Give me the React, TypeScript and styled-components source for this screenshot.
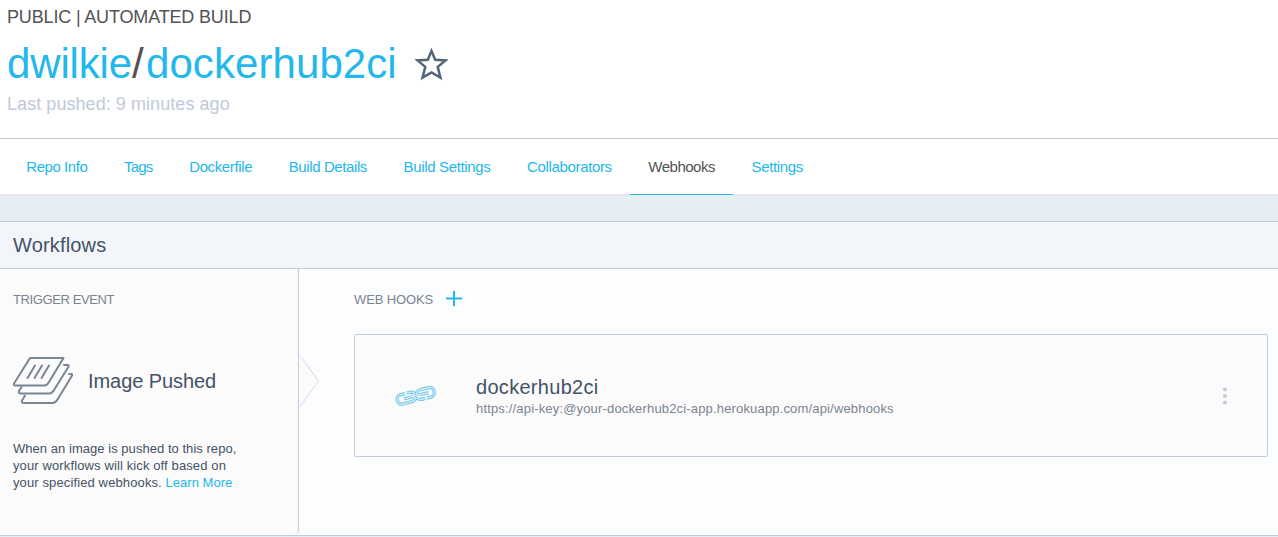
import React from 'react';
import styled, { createGlobalStyle } from 'styled-components';

const GlobalStyle = createGlobalStyle`
  * { box-sizing: border-box; }
  body {
    margin: 0;
    background: #fff;
    font-family: "Liberation Sans", Arial, sans-serif;
    color: #445266;
    overflow: hidden;
  }
`;

const Page = styled.div`
  height: 537px;
  display: flex;
  flex-direction: column;
  background: #e7edf5;
  overflow: hidden;
`;

const RepoHeader = styled.header`
  flex: none;
  height: 139px;
  padding: 6px 7px 0;
  background: #fff;
  border-bottom: 1px solid #c0c9d3;
  white-space: nowrap;
`;

const Visibility = styled.div`
  font-size: 18px;
  line-height: 23px;
  letter-spacing: -0.16px;
  color: #535353;
`;

const TitleRow = styled.div`
  display: flex;
  align-items: center;
  gap: 17px;
  height: 62px;
  padding-top: 7px;

  svg { flex: none; }
`;

const Title = styled.h1`
  margin: 0;
  font-weight: 400;
  font-size: 42px;
  line-height: 52px;
  letter-spacing: 0.08px;
  color: #22b8eb;
`;

const Owner = styled.span`
  letter-spacing: -0.15px;
`;

const Slash = styled.span`
  letter-spacing: 2.3px;
  color: #535353;
`;

const LastPushed = styled.div`
  margin-top: 2px;
  font-size: 18px;
  line-height: 22px;
  letter-spacing: 0.06px;
  color: #c0c9da;
`;

const TabBar = styled.nav`
  flex: none;
  display: flex;
  height: 56px;
  padding-left: 8px;
  background: linear-gradient(#fff 55px, #e1e8f1 55px);
`;

const Tab = styled.a<{ $active?: boolean; $track: number }>`
  flex: none;
  padding: 18px 18.3px 0;
  font-size: 15px;
  line-height: 20px;
  white-space: nowrap;
  letter-spacing: ${(p) => p.$track}px;
  color: ${(p) => (p.$active ? '#535353' : '#22b8eb')};
  border-bottom: 1px solid ${(p) => (p.$active ? '#22b8eb' : 'transparent')};
`;

const Panel = styled.section`
  flex: none;
  margin-top: 26px;
  height: 315px;
  border-top: 1px solid #c0ccdc;
  border-bottom: 1px solid #c0ccdc;
  background: #fcfdff;
`;

const PanelHeading = styled.h2`
  margin: 0;
  height: 47px;
  padding-left: 13px;
  font-weight: 400;
  font-size: 20px;
  line-height: 46px;
  letter-spacing: 0.16px;
  background: #f2f5fa;
  border-bottom: 1px solid #c0ccdc;
`;

const Columns = styled.div`
  display: flex;
  height: 266px;
`;

const Trigger = styled.aside`
  position: relative;
  flex: none;
  width: 299px;
  height: 265px;
  padding: 22px 0 0 13px;
  background: #fbfbfb;
  border-right: 1px solid #c0ccdc;
  border-bottom-right-radius: 4px;
`;

const Pointer = styled.svg`
  position: absolute;
  left: 299px;
  top: 86px;
`;

const Caption = styled.div<{ $track: number }>`
  font-size: 13px;
  line-height: 18px;
  letter-spacing: ${(p) => p.$track}px;
  color: #7a8491;
`;

const EventRow = styled.div`
  display: flex;
  align-items: center;
  gap: 14px;
  margin-top: 47px;
  height: 50px;
`;

const EventName = styled.div`
  font-size: 20px;
  line-height: 24px;
  letter-spacing: -0.07px;
`;

const Description = styled.p`
  margin: 34px 0 0;
  font-size: 13px;
  line-height: 17px;
  letter-spacing: 0.12px;
  white-space: nowrap;
`;

const OpeningLine = styled.span`
  letter-spacing: 0.04px;
`;

const Link = styled.a`
  letter-spacing: 0.02px;
  color: #22b8eb;
`;

const Hooks = styled.div`
  flex: 1;
  padding: 22px 10px 0 55px;
`;

const HooksTitle = styled.div`
  display: flex;
  align-items: flex-start;
  gap: 13px;
  height: 18px;
`;

const HookCard = styled.article`
  display: flex;
  align-items: center;
  height: 123px;
  margin-top: 25px;
  padding: 0 39px 0 39px;
  border: 1px solid #c0ccdc;
  border-radius: 2px;
  background: #fbfbfb;
`;

const HookText = styled.div`
  flex: 1;
  margin-left: 38px;
  padding-top: 1px;
`;

const HookName = styled.div`
  margin-bottom: 1px;
  font-size: 20px;
  line-height: 24px;
  letter-spacing: 0.3px;
`;

const HookUrl = styled.div`
  font-size: 13px;
  line-height: 18px;
  letter-spacing: 0.165px;
  color: #7a8491;
`;

const tabs = [
  { label: 'Repo Info', track: -0.45 },
  { label: 'Tags', track: -0.75 },
  { label: 'Dockerfile', track: -0.37 },
  { label: 'Build Details', track: -0.4 },
  { label: 'Build Settings', track: -0.34 },
  { label: 'Collaborators', track: -0.35 },
  { label: 'Webhooks', track: -0.5, active: true },
  { label: 'Settings', track: -0.36 },
];

const Star = () => (
  <svg width="34" height="34" viewBox="0 0 34 34" fill="none" stroke="#556578" strokeWidth="2.5">
    <path d="M17.500 4L21.200 12.800L31.500 13.400L23.700 19.900L26.500 30.600L17.500 25.400L8.500 30.600L11.300 19.900L3.500 13.400L13.800 12.800Z" />
  </svg>
);

const Stack = () => (
  <svg width="61" height="50" viewBox="0 0 61 50" fill="none" stroke="#7a8696" strokeWidth="2" strokeLinejoin="round" strokeLinecap="round">
    <path d="M17 2H50.500L36 26Q34 29.500 31.500 29.500H2Q0 29.500 1 27.500Z" />
    <path d="M51 9H54.500Q56.500 9 55 11.500L41 34Q39 37.500 36 37.500H8Q5 37.500 6 35L8.500 31" />
    <path d="M56 18H58Q60 18 58.500 20.500L44.500 43.500Q42.500 47 39.500 47H11Q8 47 9 44.500L12 39.500" />
    <path d="M22 9.500L14.500 22M29 9.500L21.500 22M36 9.500L28.500 22" />
  </svg>
);

const chainLinks =
  'M12 7H7.500A4.800 4.800 0 0 0 7.500 16.600H16Q20.500 16.600 21.500 12.500M13.500 7H17Q20 7 21.500 9.500M9.500 11.800H19M22.500 12.500Q23 7 28 7H36A4.800 4.800 0 0 1 36 16.600H32M30.500 16.600H27Q24.500 16.600 23 14.500M25.500 11.800H35';

const Chain = () => (
  <svg width="44" height="24" viewBox="0 0 44 24" fill="none">
    <g transform="rotate(-14 22 12)">
      <path d={chainLinks} stroke="#73cbea" strokeWidth="3.400" />
      <path d={chainLinks} stroke="#d0e9f4" strokeWidth="1.400" />
    </g>
  </svg>
);

const Plus = () => (
  <svg width="16" height="16" viewBox="0 0 16 16" fill="#22b8eb">
    <path d="M7 0H9V15H7ZM0 6.500H16V8.500H0Z" />
  </svg>
);

const Dots = () => (
  <svg width="6" height="18" viewBox="0 0 6 18" fill="#c0ccdc">
    <circle cx="3" cy="2.500" r="2.100" />
    <circle cx="3" cy="9" r="2.100" />
    <circle cx="3" cy="15.500" r="2.100" />
  </svg>
);

export default function App() {
  return (
    <>
      <GlobalStyle />
      <Page>
        <RepoHeader>
          <Visibility>PUBLIC | AUTOMATED BUILD</Visibility>
          <TitleRow>
            <Title><Owner>dwilkie</Owner><Slash>/</Slash>dockerhub2ci</Title>
            <Star />
          </TitleRow>
          <LastPushed>Last pushed: 9 minutes ago</LastPushed>
        </RepoHeader>
        <TabBar>
          {tabs.map((t) => (
            <Tab key={t.label} $active={t.active} $track={t.track}>{t.label}</Tab>
          ))}
        </TabBar>
        <Panel>
          <PanelHeading>Workflows</PanelHeading>
          <Columns>
            <Trigger>
              <Caption $track={-0.4}>TRIGGER EVENT</Caption>
              <EventRow>
                <Stack />
                <EventName>Image Pushed</EventName>
              </EventRow>
              <Description>
                <OpeningLine>When an image is pushed to this repo,</OpeningLine><br />
                your workflows will kick off based on<br />
                your specified webhooks. <Link>Learn More</Link>
              </Description>
              <Pointer width="21" height="52" viewBox="0 0 21 52" fill="#fbfbfb" stroke="#d3d9e6">
                <path d="M1 .5L19.500 26L1 51.500" />
              </Pointer>
            </Trigger>
            <Hooks>
              <HooksTitle>
                <Caption $track={-0.12}>WEB HOOKS</Caption>
                <Plus />
              </HooksTitle>
              <HookCard>
                <Chain />
                <HookText>
                  <HookName>dockerhub2ci</HookName>
                  <HookUrl>https://api-key:@your-dockerhub2ci-app.herokuapp.com/api/webhooks</HookUrl>
                </HookText>
                <Dots />
              </HookCard>
            </Hooks>
          </Columns>
        </Panel>
      </Page>
    </>
  );
}
